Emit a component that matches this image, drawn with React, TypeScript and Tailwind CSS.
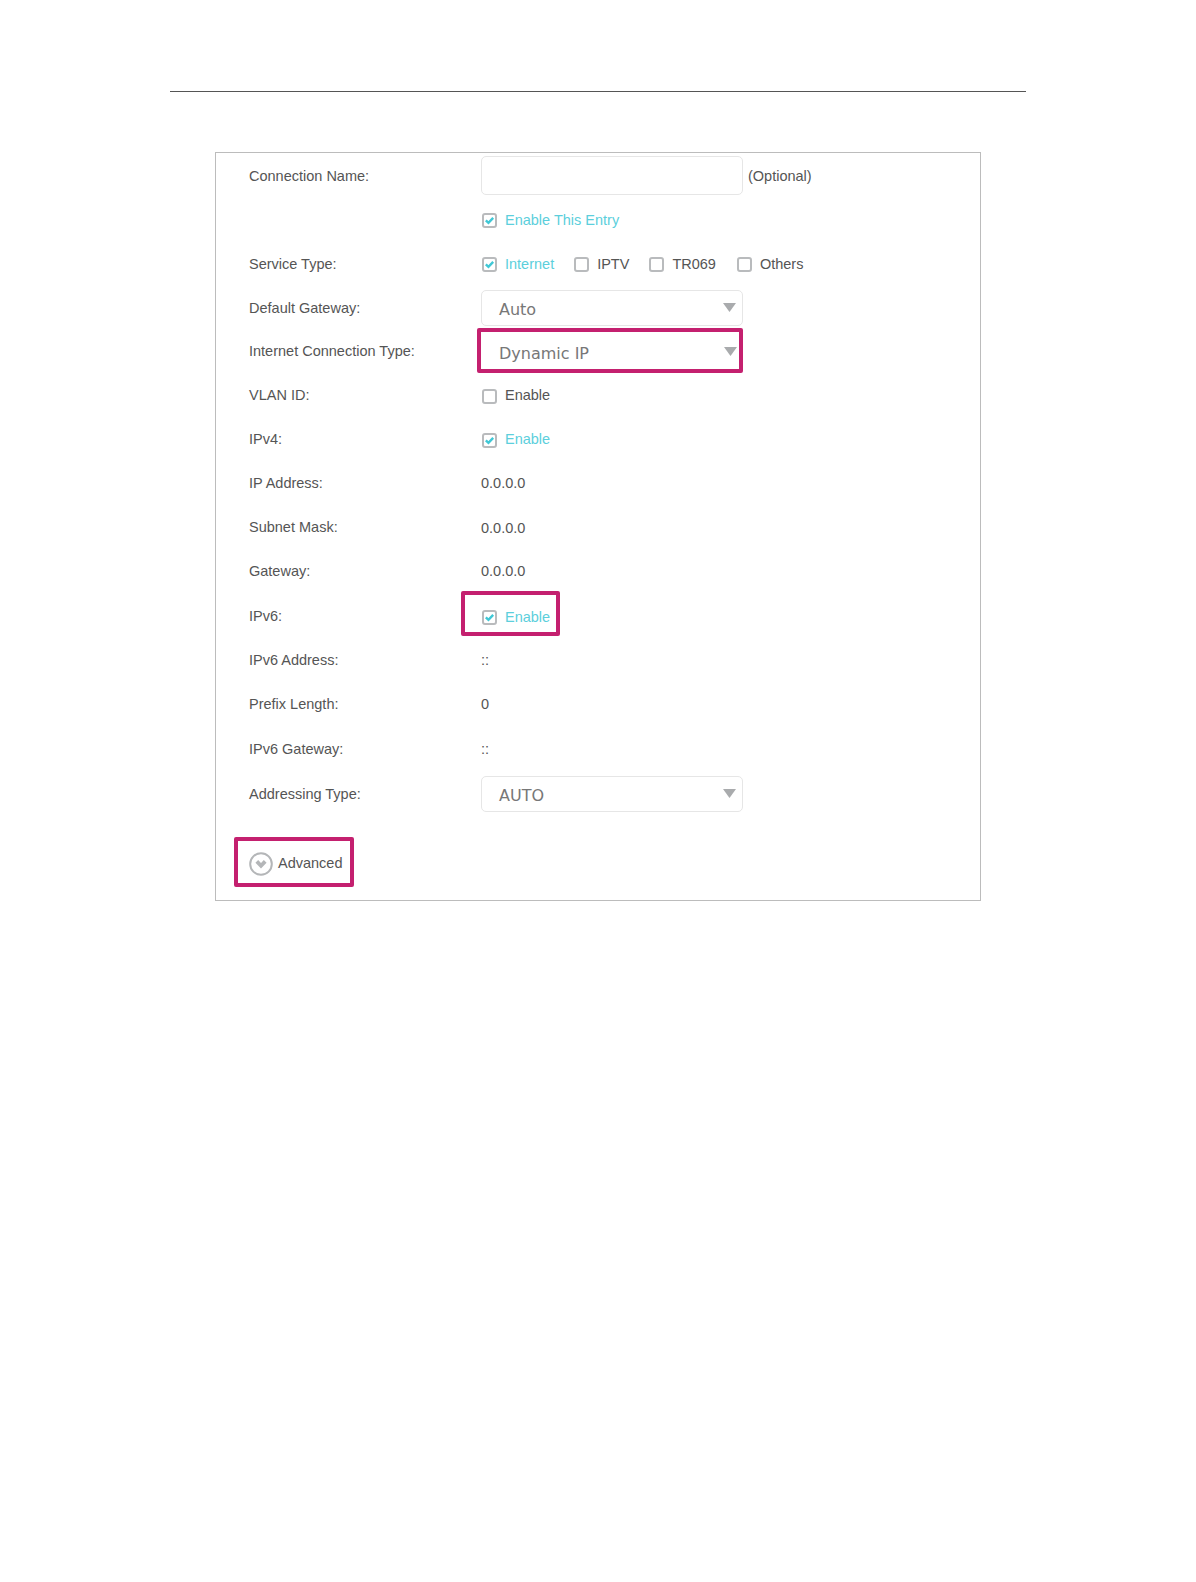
import React from 'react';

const Check: React.FC<{ checked?: boolean }> = ({ checked }) => (
    <span className="w-[15px] h-[15px] shrink-0 rounded-[3px] border-2 border-[#b9bbbd] bg-white flex items-center justify-center">
        {checked && (
            <svg viewBox="0 0 12 12" className="w-[11px] h-[11px]">
                <path d="M2 5.8 L4.9 8.6 L10 3.2" fill="none" stroke="#3fc8d6" strokeWidth="2.6" />
            </svg>
        )}
    </span>
);

const Option: React.FC<{ label: string; checked?: boolean; className?: string }> = ({ label, checked, className }) => (
    <div className={`flex items-center gap-[8px] ${className ?? ''}`}>
        <Check checked={checked} />
        <span className={checked ? 'text-[#5ccfdc]' : ''}>{label}</span>
    </div>
);

const Select: React.FC<{ value: string; bare?: boolean }> = ({ value, bare }) => (
    <div className={`w-[262px] h-[36px] rounded-[5px] flex items-center justify-between pr-[6px] ${bare ? 'pl-[18px]' : 'pl-[17px] border border-[#e6e6e6]'}`}>
        <span className="font-['DejaVu_Sans',sans-serif] text-[16px] text-[#777] pt-[4px]">{value}</span>
        <svg viewBox="0 0 13 9" className="w-[13px] h-[9px] mb-[1px]">
            <path d="M0 0 H13 L6.5 9 Z" fill="#a9abad" />
        </svg>
    </div>
);

const Row: React.FC<{ label?: string; height: string; labelClass?: string; children?: React.ReactNode }> = ({ label, height, labelClass, children }) => (
    <div className={`flex items-center ${height}`}>
        <div className={`w-[265px] pl-[33px] shrink-0 pr-2 ${labelClass ?? ''}`}>{label}</div>
        <div className="flex items-center">{children}</div>
    </div>
);

const App: React.FC = () => {
    return (
        <div className="w-[1196px] h-[1582px] bg-white font-['Liberation_Sans',Arial,sans-serif] text-[14.5px] text-[#555] overflow-hidden">
            <div className="pt-[91px] px-[170px]">
                <div className="h-px bg-[#555]" />
            </div>
            <div className="relative ml-[215px] mt-[60px] w-[766px] h-[749px] border border-[#bcbcbc]">
                <Row label="Connection Name:" height="h-[45px]" labelClass="pt-[2px]">
                    <div className="w-[262px] h-[39px] rounded-[5px] border border-[#e6e6e6]" />
                    <span className="ml-[5px] pt-[2px]">(Optional)</span>
                </Row>
                <Row height="h-[45px]">
                    <Option label="Enable This Entry" checked className="ml-px" />
                </Row>
                <Row label="Service Type:" height="h-[43px]">
                    <Option label="Internet" checked className="ml-px" />
                    <Option label="IPTV" className="ml-[20px]" />
                    <Option label="TR069" className="ml-[20px]" />
                    <Option label="Others" className="ml-[21px]" />
                </Row>
                <Row label="Default Gateway:" height="h-[44px]" labelClass="pt-[2px]">
                    <Select value="Auto" />
                </Row>
                <Row label="Internet Connection Type:" height="h-[44px]">
                    <Select value="Dynamic IP" bare />
                </Row>
                <Row label="VLAN ID:" height="h-[44px]">
                    <Option label="Enable" className="ml-px" />
                </Row>
                <Row label="IPv4:" height="h-[44px]">
                    <Option label="Enable" checked className="ml-px" />
                </Row>
                <Row label="IP Address:" height="h-[44px]">0.0.0.0</Row>
                <Row label="Subnet Mask:" height="h-[44px]">
                    <span className="pt-[2px]">0.0.0.0</span>
                </Row>
                <Row label="Gateway:" height="h-[44px]">0.0.0.0</Row>
                <Row label="IPv6:" height="h-[45px]">
                    <Option label="Enable" checked className="ml-px pt-[2px]" />
                </Row>
                <Row label="IPv6 Address:" height="h-[44px]">::</Row>
                <Row label="Prefix Length:" height="h-[44px]">0</Row>
                <Row label="IPv6 Gateway:" height="h-[45px]">::</Row>
                <Row label="Addressing Type:" height="h-[45px]">
                    <div className="-mt-[2px]">
                        <Select value="AUTO" />
                    </div>
                </Row>
                <div className="flex items-center gap-[5px] pl-[33px] mt-[35px]">
                    <svg viewBox="0 0 24 24" className="w-[24px] h-[24px]">
                        <circle cx="12" cy="12" r="10.8" fill="none" stroke="#b4b6b8" strokeWidth="2" />
                        <path d="M7.8 9.4 L12 13.8 L16.2 9.4" fill="none" stroke="#b4b6b8" strokeWidth="3.8" />
                    </svg>
                    <span>Advanced</span>
                </div>
                <div className="absolute left-[261px] top-[175px] w-[266px] h-[45px] rounded-[2px] border-[4px] border-[#c4206f]" />
                <div className="absolute left-[245px] top-[438px] w-[99px] h-[45px] rounded-[2px] border-[4px] border-[#c4206f]" />
                <div className="absolute left-[18px] top-[684px] w-[120px] h-[50px] rounded-[2px] border-[4px] border-[#c4206f]" />
            </div>
        </div>
    );
};

export default App;
